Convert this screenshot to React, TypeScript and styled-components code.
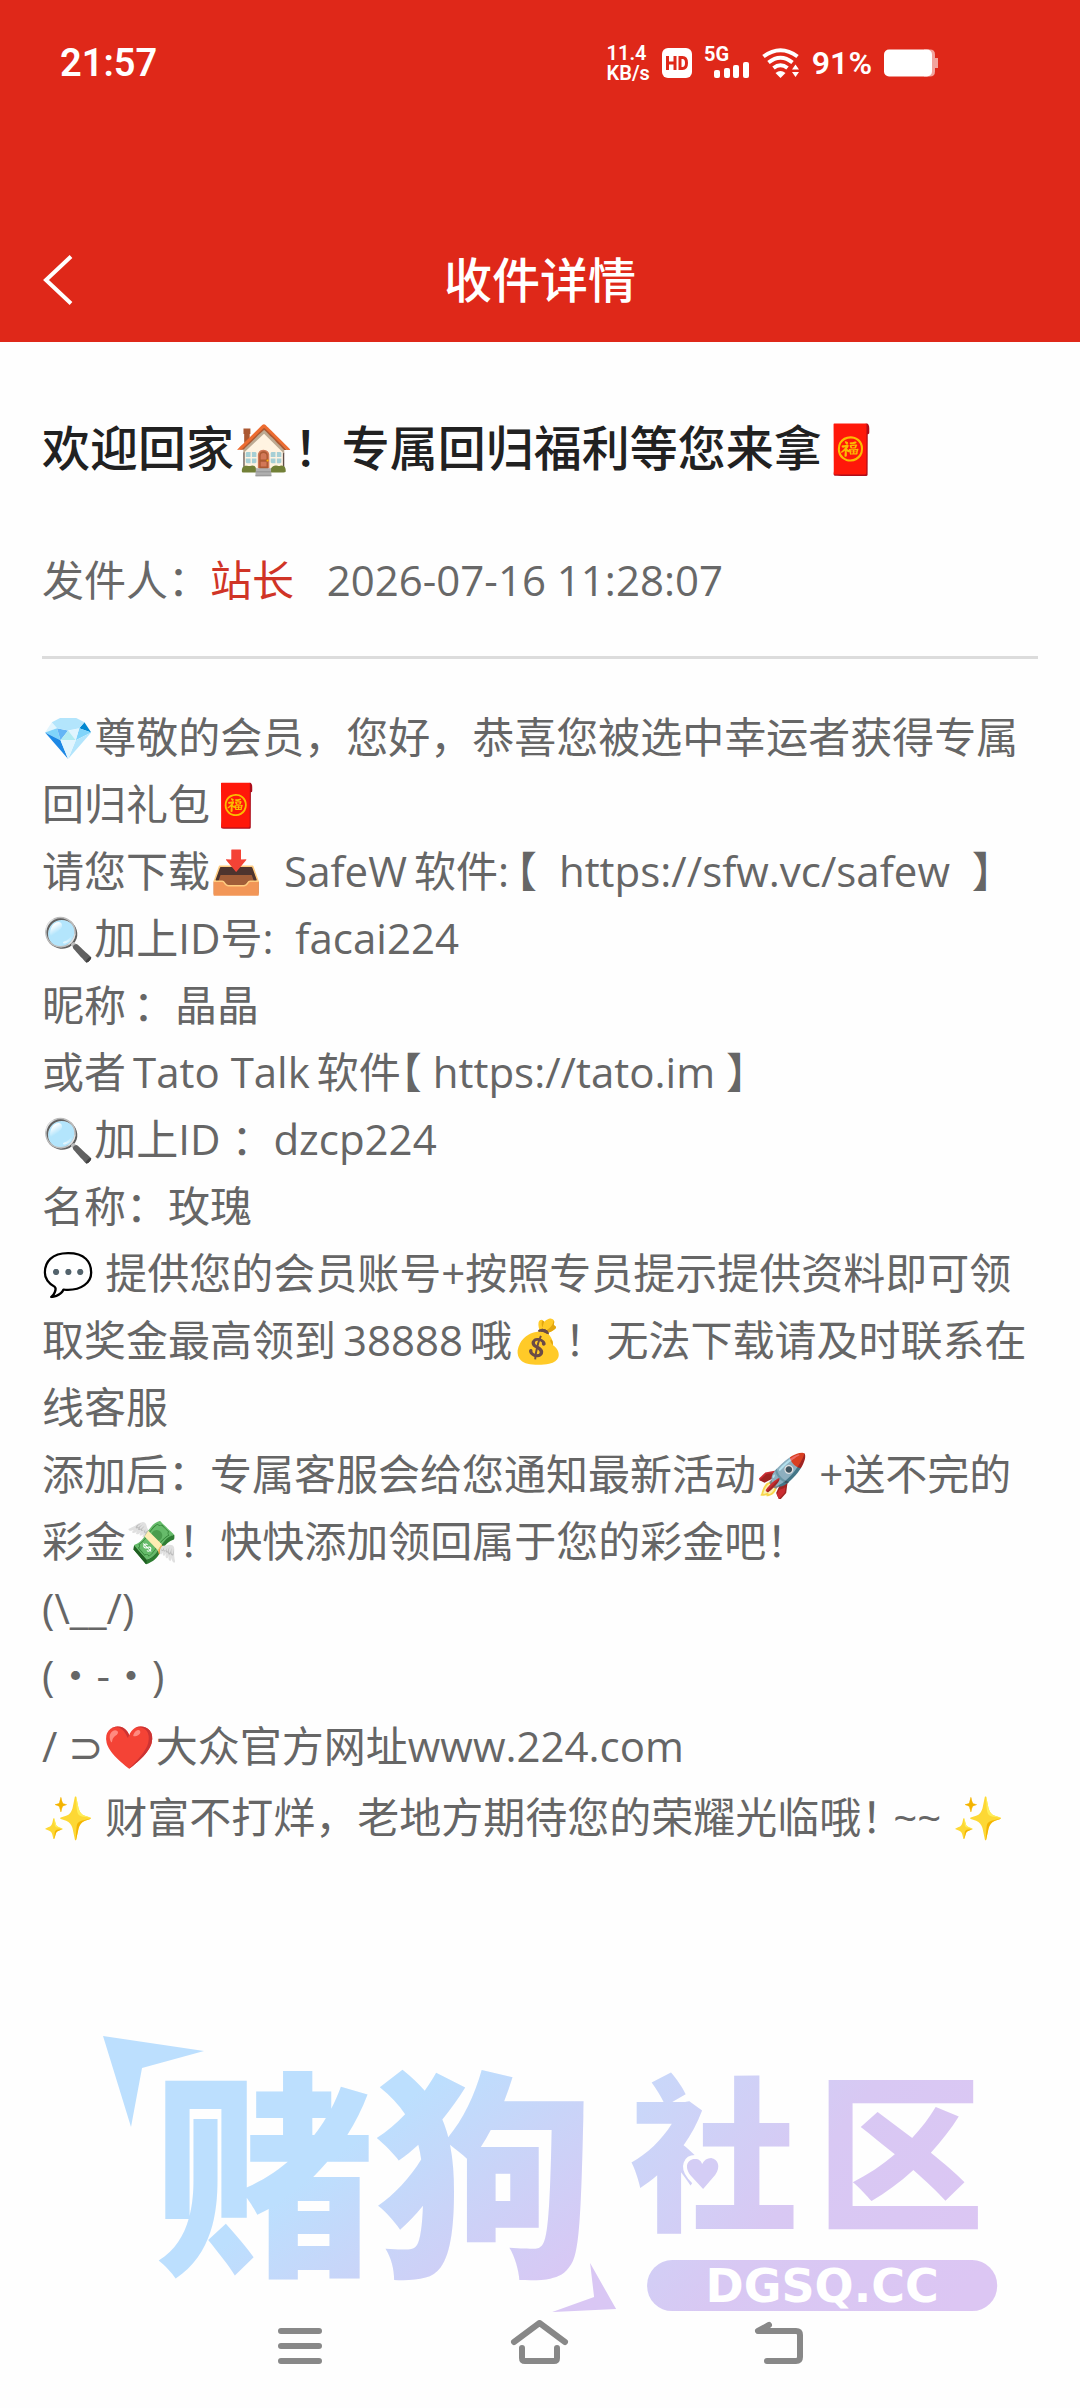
import React from "react";
import styled, { createGlobalStyle } from "styled-components";

const GlobalStyle = createGlobalStyle`
  *, *::before, *::after { box-sizing: border-box; }
  body {
    margin: 0;
    background: #fefefe;
    font-family: "Open Sans", "Noto Sans CJK SC", "Noto Color Emoji", sans-serif;
  }
`;

const Page = styled.div`
  display: flex;
  flex-direction: column;
  min-height: 100vh;
  background: #fefefe;
`;

const Header = styled.header`
  background: #df2819;
  color: #ffffff;
`;

const StatusBar = styled.div`
  display: flex;
  align-items: center;
  justify-content: space-between;
  height: 126px;
  padding: 0 142px 0 60px;
  font-family: Roboto, "Liberation Sans", sans-serif;
  font-weight: 600;
`;

const Clock = styled.time`
  font-size: 38px;
`;

const StatusIcons = styled.div`
  display: flex;
  align-items: center;
  gap: 12px;
`;

const Speed = styled.div`
  display: flex;
  flex-direction: column;
  font-size: 20px;
  line-height: 20px;
`;

const Percent = styled.span`
  font-size: 32px;
  line-height: 36px;
`;

const TitleBar = styled.div`
  display: grid;
  grid-template-columns: 116px 1fr 116px;
  align-items: center;
  height: 216px;
  padding-top: 92px;
`;

const IconButton = styled.button`
  display: flex;
  align-items: center;
  justify-content: center;
  width: 120px;
  height: 60px;
  padding: 0;
  border: 0;
  background: none;
  color: inherit;
`;

const BackButton = styled(IconButton)`
  width: 116px;
`;

const Title = styled.h1`
  margin: 0;
  text-align: center;
  font-size: 48px;
  line-height: 72px;
  font-weight: 500;
`;

const Message = styled.main`
  padding: 70px 42px 0;
`;

const Subject = styled.h2`
  margin: 0;
  color: #212121;
  font-size: 48px;
  line-height: 72px;
  font-weight: 500;
`;

const Meta = styled.p`
  margin: 0;
  padding: 60px 0 40px;
  border-bottom: 3px solid #dcdcdc;
  color: #686868;
  font-size: 42px;
  line-height: 72px;
  white-space: pre-wrap;
`;

const Sender = styled.span`
  color: #d03426;
`;

const Body = styled.div`
  padding-top: 44px;
  color: #666666;
  font-size: 42px;
  line-height: 67px;
`;

const Line = styled.p<{ $spaced?: boolean }>`
  margin: 0;
  padding-top: ${(p) => (p.$spaced ? 4 : 0)}px;
  white-space: pre-wrap;
  line-break: anywhere;
`;

const Half = styled.span`
  font-feature-settings: "halt";
`;

const Symbol = styled.span`
  font-family: "DejaVu Sans", sans-serif;
  line-height: 1;
`;

const Footer = styled.footer`
  display: flex;
  flex-direction: column;
  margin-top: auto;
`;

const Logo = styled.svg`
  display: block;
  width: 84%;
  margin-left: 9%;
`;

const Nav = styled.nav`
  display: flex;
  justify-content: center;
  gap: 120px;
  height: 96px;
  color: #888888;
`;

function SignalIcons() {
  return (
    <>
      <svg width="30" height="30" viewBox="0 0 30 30" aria-label="HD">
        <rect width="30" height="30" rx="6" fill="#fff" />
        <path d="M5.500 8v14M13 8v14M5.500 15H13M18 9.500v11h2.500q4 0 4-5.500t-4-5.500z" fill="none" stroke="#df2819" strokeWidth="3" />
      </svg>
      <svg width="46" height="48" viewBox="0 -8 46 48" aria-label="5G">
        <text x="0" y="14" fontSize="20" fontWeight="700" fill="#fff">5G</text>
        <g fill="#fff">
          <rect x="10" y="23" width="6" height="8" rx="2" />
          <rect x="20" y="21" width="6" height="10" rx="2" />
          <rect x="29" y="18" width="6" height="13" rx="2" />
          <rect x="39" y="15" width="6" height="16" rx="2" />
        </g>
      </svg>
      <svg width="38" height="30" viewBox="0 0 38 30" aria-label="Wi-Fi">
        <g fill="none" stroke="#fff" strokeWidth="4">
          <path d="M1.500 8.500Q18.500-4 35.500 8.500" />
          <path d="M6.500 14.500Q18.500 5 30.500 14.500" />
          <path d="M11.500 20Q18.500 14.500 25.500 20" />
        </g>
        <path d="M13.500 25q5-4 10 0l-5 5z" fill="#fff" />
        <path d="M30 21.500l3.500-5 3.500 5zM30 24l3.500 5 3.500-5z" fill="#fff" />
      </svg>
    </>
  );
}

export default function App() {
  return (
    <Page>
      <GlobalStyle />
      <Header>
        <StatusBar>
          <Clock>21:57</Clock>
          <StatusIcons>
            <Speed>
              <span>11.4</span>
              <span>KB/s</span>
            </Speed>
            <SignalIcons />
            <Percent>91%</Percent>
            <svg width="54" height="28" viewBox="0 0 54 28" aria-label="Battery">
              <path d="M40 0.500h6q5 0 5 5V9h3v10h-3v3.500q0 5-5 5h-6z" fill="#f2a49d" />
              <rect y="0.500" width="48" height="27" rx="5" fill="#fff" />
            </svg>
          </StatusIcons>
        </StatusBar>
        <TitleBar>
          <BackButton aria-label="返回">
            <svg width="30" height="50" viewBox="0 0 30 50">
              <path d="M28 1.500L3 25L28 48.500" fill="none" stroke="#fff" strokeWidth="4" />
            </svg>
          </BackButton>
          <Title>收件详情</Title>
        </TitleBar>
      </Header>

      <Message>
        <Subject>欢迎回家🏠！专属回归福利等您来拿🧧</Subject>
        <Meta>
          发件人：<Sender>站长</Sender>{"   "}
          <time>2026-07-16 11:28:07</time>
        </Meta>
        <Body>
          <Line>💎尊敬的会员，您好，恭喜您被选中幸运者获得专属回归礼包🧧</Line>
          <Line>
            {"请您下载📥  SafeW\u2006软件:\u2006"}
            <Half>【</Half>
            {"  https://sfw.vc/safew  】"}
          </Line>
          <Line>{"🔍加上ID号:  facai224"}</Line>
          <Line>{"昵称\u2006：晶晶"}</Line>
          <Line>
            {"或者\u2006Tato Talk\u2006软件"}
            <Half>【</Half>
            {" https://tato.im 】"}
          </Line>
          <Line>{"🔍加上ID ：dzcp224"}</Line>
          <Line>名称：玫瑰</Line>
          <Line>
            {"💬 提供您的会员账号+按照专员提示提供资料即可领取奖金最高领到\u200638888\u2006哦💰！无法下载请及时联系在线客服"}
          </Line>
          <Line>添加后：专属客服会给您通知最新活动🚀 +送不完的彩金💸！快快添加领回属于您的彩金吧！</Line>
          <Line>{"(\\__/)"}</Line>
          <Line>(・-・)</Line>
          <Line $spaced>
            {"/ "}
            <Symbol>⊃</Symbol>
            ❤️大众官方网址www.224.com
          </Line>
          <Line $spaced>
            ✨ 财富不打烊，老地方期待您的荣耀光临哦<Half>！</Half>
            {" ~~ ✨"}
          </Line>
        </Body>
      </Message>

      <Footer>
        <Logo viewBox="97 1960 907 350" aria-label="赌狗社区 DGSQ.CC">
          <defs>
            <linearGradient id="tint" gradientUnits="userSpaceOnUse" x1="330" y1="2080" x2="520" y2="2320">
              <stop offset="0.200" stopColor="#bcdffe" />
              <stop offset="0.550" stopColor="#c9d4f8" />
              <stop offset="1" stopColor="#d9c7f4" />
            </linearGradient>
            <linearGradient id="tintRight" gradientUnits="userSpaceOnUse" x1="640" y1="2060" x2="960" y2="2300">
              <stop offset="0" stopColor="#c7d9fa" />
              <stop offset="0.500" stopColor="#d8c8f3" />
              <stop offset="1" stopColor="#dcc6f3" />
            </linearGradient>
          </defs>
          <path d="M103 2034L204 2049L142 2066L131 2125z" fill="url(#tint)" />
          <path d="M590 2261L616 2307L552 2310L594 2295z" fill="url(#tint)" />
          <g fontFamily="'Noto Sans CJK SC', sans-serif" fontWeight="900">
            <text x="155" y="2257" fontSize="220" fill="url(#tint)">赌狗</text>
            <text x="630" y="2216" fontSize="168" fill="url(#tintRight)">社</text>
            <text x="816" y="2216" fontSize="168" fill="url(#tintRight)">区</text>
          </g>
          <path
            d="M703 2187L691 2174C683 2164 688 2157 695 2157C699 2157 701 2159 702 2162C704 2158 707 2156 711 2156C718 2157 721 2165 715 2173z"
            fill="#d4cdf5"
            stroke="#fefefe"
            strokeWidth="8"
            paintOrder="stroke"
          />
          <rect x="647" y="2258" width="350" height="51" rx="25" fill="url(#tintRight)" />
          <text x="822" y="2300" textAnchor="middle" fontFamily="'DejaVu Sans', sans-serif" fontWeight="700" fontSize="46" fill="#fff">DGSQ.CC</text>
        </Logo>
        <Nav>
          <IconButton aria-label="最近任务">
            <svg width="60" height="44" viewBox="0 0 60 44" fill="none" stroke="currentColor" strokeWidth="6" strokeLinecap="round">
              <path d="M11 11h38M11 26h38M11 41h38" />
            </svg>
          </IconButton>
          <IconButton aria-label="主页">
            <svg width="60" height="44" viewBox="0 0 60 44" fill="none" stroke="currentColor" strokeWidth="6" strokeLinecap="round" strokeLinejoin="round">
              <path d="M4 22L29.500 3L55 22M12 28v10q0 3 3 3h29q3 0 3-3V28" />
            </svg>
          </IconButton>
          <IconButton aria-label="返回上一页">
            <svg width="60" height="44" viewBox="0 0 60 44" fill="none" stroke="currentColor" strokeWidth="6" strokeLinecap="round" strokeLinejoin="round">
              <path d="M19 5L8 11h38q4 0 4 4v22q0 4-4 4H17" />
            </svg>
          </IconButton>
        </Nav>
      </Footer>
    </Page>
  );
}
